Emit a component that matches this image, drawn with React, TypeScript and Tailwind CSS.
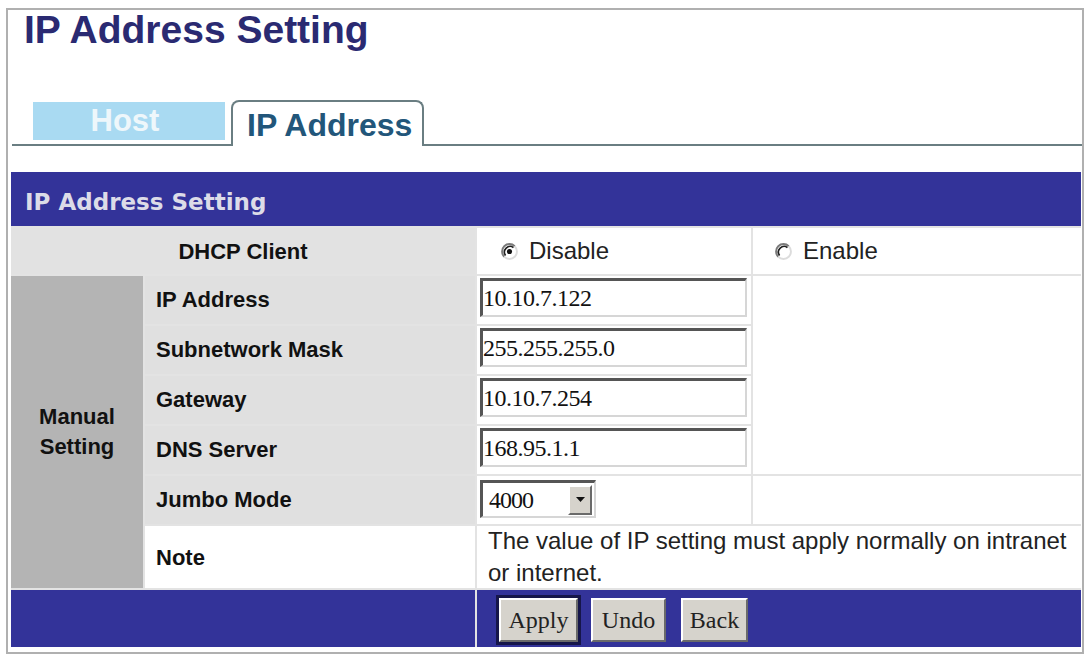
import React from 'react';

// classic win9x radio
function Radio({ checked }: { checked?: boolean }) {
  return (
    <svg width="17" height="17" viewBox="0 0 16 16" className="shrink-0">
      <circle cx="8" cy="8" r="7" fill="#fff" />
      <path d="M3.05 12.95 A7 7 0 0 1 12.95 3.05" fill="none" stroke="#7a7a7a" strokeWidth="1.8" />
      <path d="M4.3 11.7 A5.3 5.3 0 0 1 11.7 4.3" fill="none" stroke="#1e1e1e" strokeWidth="1.5" />
      <path d="M12.95 3.05 A7 7 0 0 1 3.05 12.95" fill="none" stroke="#dcdcdc" strokeWidth="1.8" />
      {checked && <circle cx="8" cy="8" r="2.4" fill="#111" />}
    </svg>
  );
}

function TextBox({ value }: { value: string }) {
  return (
    <div className="ml-[3px] mt-[2px] w-[267px] h-[39px] bg-white border-t-[3px] border-l-[3px] border-t-[#555] border-l-[#555] border-r-2 border-b-2 border-r-[#d6d6d6] border-b-[#d6d6d6] flex items-center font-['Liberation_Serif',serif] text-[24px] text-[#111] tracking-[-0.5px]">
      {value}
    </div>
  );
}

function Label({ row, children }: { row: string; children: React.ReactNode }) {
  return (
    <div className={`col-start-2 ${row} bg-[#e0e0e0] flex items-center pl-[11px] pb-[2px] text-[22px] font-bold text-[#111]`}>
      {children}
    </div>
  );
}

function Btn({ children, w }: { children: React.ReactNode; w: string }) {
  return (
    <div className={`${w} h-[44px] bg-[#d6d3cc] border-2 border-t-white border-l-white border-r-[#6a6a6a] border-b-[#6a6a6a] flex items-center justify-center font-['Liberation_Serif',serif] text-[24px] text-[#222]`}>
      {children}
    </div>
  );
}

export default function App() {
  return (
    <div className="w-[1087px] h-[654px] overflow-hidden bg-white pt-[8px] pl-[6px] font-['Liberation_Sans',Arial,sans-serif]">
      <div className="w-[1078px] h-[646px] border-2 border-[#b0b0b0] flex flex-col">
        {/* page title */}
        <h1 className="mt-[1px] pl-[16px] text-[39px] leading-[38px] font-bold text-[#2a2a72]">
          IP Address Setting
        </h1>

        {/* tabs */}
        <div className="mt-[51px] ml-[4px] h-[46px] flex items-end border-b-2 border-[#6a7e82]">
          <div className="ml-[21px] mb-[4px] w-[192px] h-[38px] bg-[#a9daf2] flex items-center justify-center pr-[8px] text-[31px] leading-[38px] font-bold text-[#eef7fb]">
            Host
          </div>
          <div className="relative ml-[6px] -mb-[2px] w-[193px] h-[46px] bg-white border-2 border-b-0 border-[#6a7e82] rounded-t-[8px] pl-[14px] pt-[8px] text-[32px] leading-[31px] font-bold text-[#22567a]">
            IP Address
          </div>
        </div>

        {/* settings table */}
        <div className="mt-[26px] ml-[3px] w-[1070px] grid grid-cols-[132px_330px_274px_328px] grid-rows-[54px_46px_48px_48px_48px_48px_48px_62px_57px] gap-[2px] bg-[#e3e3e3]">
          <div className="col-span-4 bg-[#333399] flex items-center pl-[14px] pt-[7px] font-['DejaVu_Sans',Verdana,sans-serif] text-[23px] font-bold text-[#dcdce8]">
            IP Address Setting
          </div>

          <div className="col-span-2 bg-[#e2e2e2] flex items-center justify-center text-[22px] font-bold text-[#111]">
            DHCP Client
          </div>
          <div className="bg-white flex items-center pl-[24px] gap-[11px] text-[24px] text-[#222]">
            <Radio checked />
            Disable
          </div>
          <div className="bg-white flex items-center pl-[22px] gap-[11px] text-[24px] text-[#222]">
            <Radio />
            Enable
          </div>

          <div className="col-start-1 row-start-3 row-span-6 bg-[#b4b4b4] flex items-center justify-center text-center text-[22px] leading-[30px] font-bold text-[#111]">
            Manual
            <br />
            Setting
          </div>

          <Label row="row-start-3">IP Address</Label>
          <div className="col-start-3 row-start-3 bg-white"><TextBox value="10.10.7.122" /></div>
          <div className="col-start-4 row-start-3 row-span-4 bg-white" />

          <Label row="row-start-4">Subnetwork Mask</Label>
          <div className="col-start-3 row-start-4 bg-white"><TextBox value="255.255.255.0" /></div>

          <Label row="row-start-5">Gateway</Label>
          <div className="col-start-3 row-start-5 bg-white"><TextBox value="10.10.7.254" /></div>

          <Label row="row-start-6">DNS Server</Label>
          <div className="col-start-3 row-start-6 bg-white"><TextBox value="168.95.1.1" /></div>

          <Label row="row-start-7">Jumbo Mode</Label>
          <div className="col-start-3 row-start-7 bg-white">
            <div className="ml-[3px] mt-[4px] w-[116px] h-[38px] bg-white border-t-[3px] border-l-[3px] border-t-[#555] border-l-[#555] border-r-2 border-b-2 border-r-[#d6d6d6] border-b-[#d6d6d6] flex items-center">
              <span className="pl-[6px] flex-1 font-['Liberation_Serif',serif] text-[24px] tracking-[-1px] text-[#111]">4000</span>
              <span className="mr-[2px] w-[24px] h-[30px] bg-[#d6d3cc] border-2 border-t-white border-l-white border-r-[#6a6a6a] border-b-[#6a6a6a] flex items-center justify-center">
                <svg width="9" height="5" viewBox="0 0 9 5"><path d="M0 0h9L4.5 5z" fill="#111" /></svg>
              </span>
            </div>
          </div>
          <div className="col-start-4 row-start-7 bg-white" />

          <div className="col-start-2 row-start-8 bg-white flex items-center pl-[11px] text-[22px] font-bold text-[#111]">
            Note
          </div>
          <div className="col-start-3 row-start-8 col-span-2 bg-white flex items-center pl-[11px] pr-[6px] text-[24px] leading-[32px] text-[#222]">
            The value of IP setting must apply normally on intranet or internet.
          </div>

          <div className="col-start-1 row-start-9 col-span-2 bg-[#333399]" />
          <div className="col-start-3 row-start-9 col-span-2 bg-[#333399] flex items-center pl-[19px] pt-[2px]">
            <div className="border-[3px] border-[#16164a]">
              <Btn w="w-[79px]">Apply</Btn>
            </div>
            <div className="ml-[10px]"><Btn w="w-[75px]">Undo</Btn></div>
            <div className="ml-[15px]"><Btn w="w-[67px]">Back</Btn></div>
          </div>
        </div>
      </div>
    </div>
  );
}
